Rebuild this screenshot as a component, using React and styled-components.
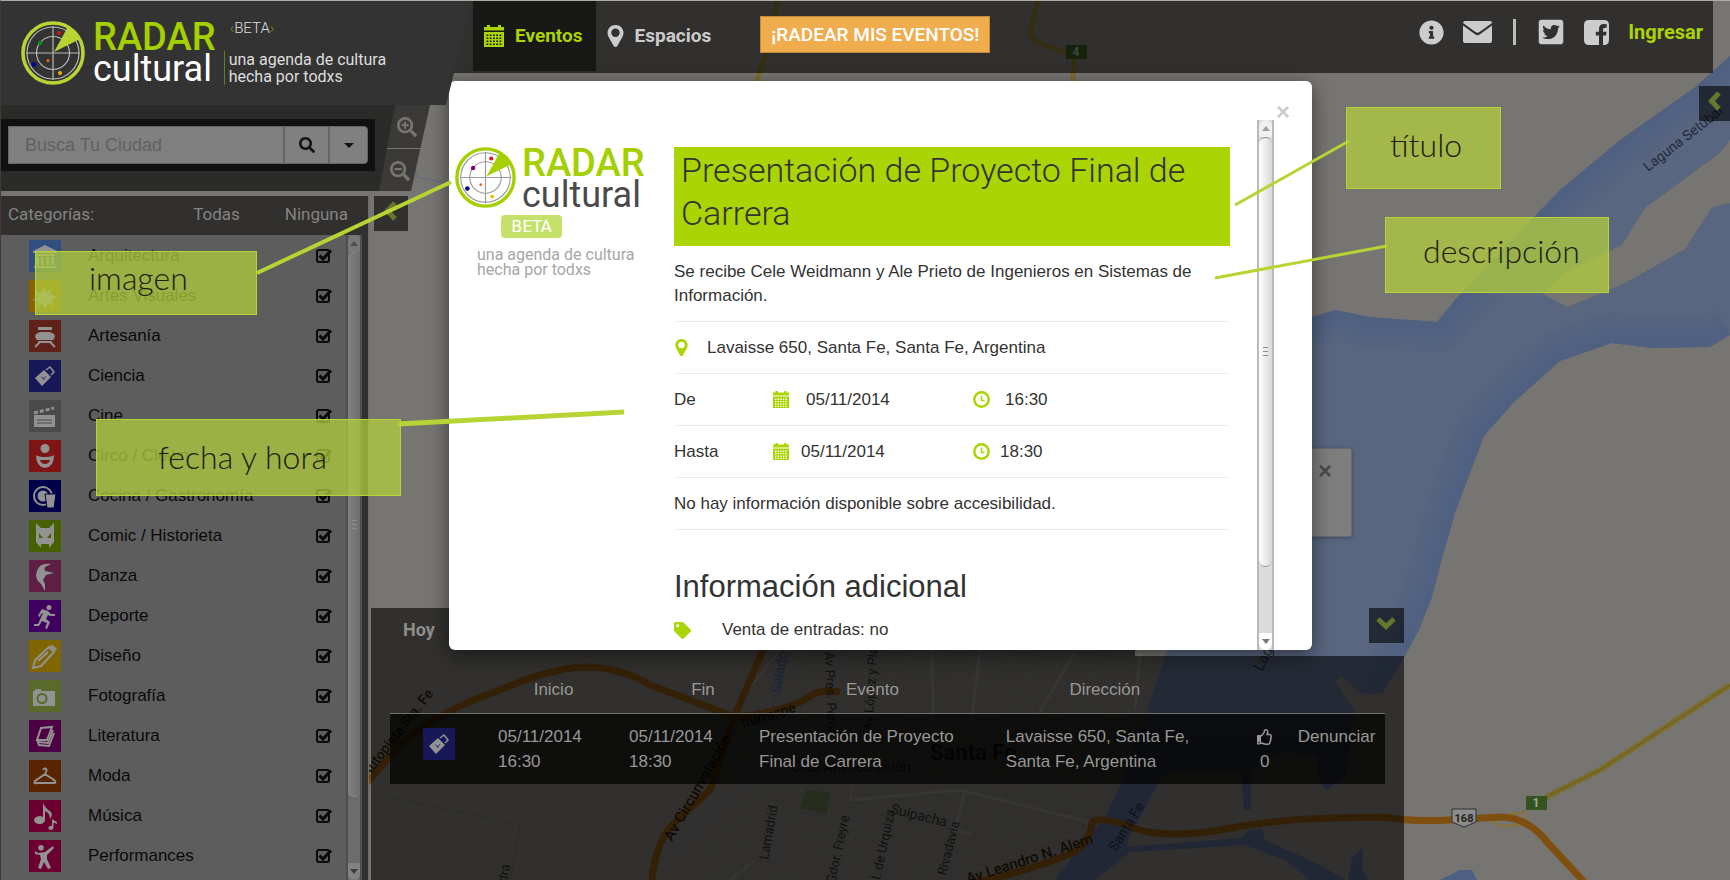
import React from "react";
import styled, { createGlobalStyle, css } from "styled-components";
import {
  FaSearch,
  FaSearchPlus,
  FaSearchMinus,
  FaInfoCircle,
  FaTwitterSquare,
  FaRegThumbsUp,
  FaTag,
} from "react-icons/fa";

const sans = `"Liberation Sans", Arial, sans-serif`;
const techno = `Roboto, "Open Sans", sans-serif`;
const thin = `Lato, "Open Sans", sans-serif`;
const green = "#abd404";
const lime = "#b6d433";
const shade = "rgba(0, 0, 0, 0.59)";

const GlobalStyle = createGlobalStyle`
  *, *::before, *::after { box-sizing: border-box; }
  body { margin: 0; background: #777571; font: 17px/24px ${sans}; overflow: hidden; }
  button, input { font: inherit; margin: 0; padding: 0; border: 0; background: none; color: inherit; }
  h1, h2, p, ul { margin: 0; padding: 0; font-weight: 400; }
  a { color: inherit; text-decoration: none; }
  svg { display: block; flex: none; }
`;

const Page = styled.div`
  position: relative;
  display: flex;
  flex-direction: column;
  height: 100vh;
  overflow: hidden;
  border-top: 1px solid #aeada3;
  border-left: 1px solid #4a3438;
`;

const MapLayer = styled.svg`
  position: absolute;
  top: -1px;
  left: -1px;
  width: 1730px;
  min-width: 100vw;
  height: auto;
`;

/* top bar */

const TopBar = styled.header`
  position: relative;
  display: flex;
  align-items: flex-start;
`;

const Brand = styled.div`
  position: relative;
  z-index: 3;
  display: flex;
  flex: 0 0 471px;
  height: 104px;
  padding: 20px 0 0 20px;
  gap: 8px;
  background: #333333;
  clip-path: polygon(0 0, 100% 0, 445px 100%, 0 100%);
`;

const Wordmark = styled.div`
  font-family: ${techno};
  color: ${(p) => p.$ink};
`;

const Radar = styled.div`
  font-size: 38px;
  line-height: 33px;
  font-weight: 500;
  color: #a4d000;
`;

const Cultural = styled.div`
  font-size: 36px;
  line-height: 30px;
`;

const BrandAside = styled.div`
  display: flex;
  flex-direction: column;
  justify-content: space-between;
  height: 64px;
`;

const Beta = styled.span`
  padding-left: 6px;
  font: 300 15px/15px ${techno};
  color: #dddddd;

  i {
    font-style: normal;
    color: #6f9a12;
  }
`;

const Tagline = styled.p`
  font: 16px/17px ${techno};
  color: #dddddd;
  padding-left: 4px;
  border-left: 1px solid #5c8418;
`;

const Nav = styled.nav`
  display: flex;
  flex: 1;
  align-items: flex-start;
  height: 72px;
  margin: 0 17px 0 -26px;
  padding-left: 27px;
  background: ${shade};
`;

const NavLink = styled.a`
  display: flex;
  align-items: center;
  gap: 11px;
  height: 70px;
  padding: 0 13px 0 11px;
  font: 700 19px/24px ${techno};
  color: ${(p) => (p.$active ? green : "#cccccc")};
  background: ${(p) => (p.$active ? "#181817" : "transparent")};
`;

const CallToAction = styled.button`
  height: 37px;
  margin: 15px auto 0 36px;
  padding: 0 10px;
  border: 1px solid #bf8a3e;
  background: #f0ad4e;
  font: 500 19px/24px ${techno};
  color: #ffffff;
`;

const NavIcons = styled.div`
  display: flex;
  align-items: center;
  gap: 19px;
  margin-top: 17px;
  padding-right: 10px;
  color: #cccccc;

  a {
    display: flex;
    align-items: center;
  }
`;

const NavDivider = styled.span`
  width: 3px;
  height: 26px;
  margin: 0 2px;
  background: #bdbdb8;
`;

const SignIn = styled.a`
  font: 700 20px/24px ${techno};
  color: ${green};
`;

/* sidebar */

const Body = styled.div`
  position: relative;
  display: grid;
  grid-template-columns: 370px 1fr;
  flex: 1;
  min-height: 0;
`;

const Sidebar = styled.aside`
  display: flex;
  flex-direction: column;
  min-height: 0;
`;

const SearchArea = styled.div`
  display: flex;
  width: 429px;
  height: 86px;
  flex: none;
  clip-path: polygon(0 0, 100% 0, 410px 100%, 0 100%);
`;

const SearchShade = styled.div`
  flex: 0 0 394px;
  padding-top: 14px;
  background: #2b2b29;
  clip-path: polygon(0 0, 100% 0, 378px 100%, 0 100%);
`;

const SearchBox = styled.form`
  display: flex;
  width: 374px;
  height: 52px;
  padding: 7px;
  background: #111111;

  > * {
    height: 38px;
    border: 1px solid #666666;
    background: #808080;
  }
`;

const SearchInput = styled.input`
  flex: 1;
  min-width: 0;
  padding: 0 16px !important;
  font-size: 18px !important;
  color: #222222;

  &::placeholder {
    color: #616161;
    opacity: 1;
  }
`;

const SearchButton = styled.button`
  display: grid;
  place-items: center;
  width: ${(p) => p.$width}px;
  color: #111111;
  border-radius: ${(p) => (p.$last ? "0 4px 4px 0" : "0")};
`;

const ZoomStack = styled.div`
  display: flex;
  flex-direction: column;
  flex: 1;
  margin-left: -16px;
  background: #3b3a38;
`;

const ZoomButton = styled.button`
  flex: 1;
  display: flex;
  align-items: center;
  padding: 2px 0 0 ${(p) => p.$indent}px !important;
  color: #75746f;

  & + & {
    border-top: 1px solid #75746f;
  }
`;

const Categories = styled.div`
  display: flex;
  align-items: flex-start;
  gap: 5px;
  flex: 1;
  min-height: 0;
  width: 407px;
  margin-top: 5px;
`;

const CategoryPanel = styled.section`
  display: flex;
  flex-direction: column;
  width: 368px;
  height: 100%;
  background: #31302e;
  border-right: 1px solid #6c6b68;
`;

const CategoryHead = styled.div`
  display: flex;
  align-items: flex-start;
  flex: none;
  height: 39px;
  padding: 6px 20px 0 7px;
  font: 17px/24px ${techno};
  color: #858482;

  h2 {
    flex: 1;
    font: inherit;
  }
  button + button {
    margin-left: 45px;
  }
`;

const CategoryBody = styled.div`
  display: flex;
  flex: 1;
  min-height: 0;
  padding-right: 6px;
`;

const CategoryList = styled.ul`
  flex: 1;
  overflow: hidden;
  list-style: none;
  background: #5d5d5d;
  padding-top: 2px;
`;

const CategoryRow = styled.li`
  height: 40px;
  padding: 3px 14px 0 28px;

  label {
    display: flex;
    align-items: center;
    height: 32px;
    color: #0a0a0a;
  }
  label > span:nth-child(2) {
    flex: 1;
    padding-left: 27px;
  }
`;

const Tile = styled.span`
  display: grid;
  place-items: center;
  width: 32px;
  height: 32px;
  background: ${(p) => p.$color};
`;

const Check = styled.span`
  display: grid;
  width: 16px;
  height: 16px;

  input,
  svg {
    grid-area: 1 / 1;
  }
  input {
    appearance: none;
    width: 14px;
    height: 14px;
    margin-top: 1px;
    border: 2px solid #0a0a0a;
    border-radius: 3px;
  }
  svg {
    pointer-events: none;
    overflow: visible;
  }
`;

const PanelToggle = styled.button`
  display: grid;
  place-items: center;
  width: ${(p) => p.$width}px;
  height: 35px;
  flex: none;
  padding-bottom: 6px !important;
  background: ${shade};
`;

const RightToggle = styled.div`
  position: absolute;
  top: 85px;
  right: 0;
`;

/* scrollbar */

const scrollTones = {
  light: { rail: "#dddbd9", edge: "#bbb8b5", from: "#ffffff", to: "#dad8d6", ink: "#777777" },
  dark: { rail: "#6e6c6a", edge: "#4e4e4e", from: "#828282", to: "#6c6c6c", ink: "#3c3c3c" },
};

const Scroll = styled.div`
  display: flex;
  flex-direction: column;
  flex: none;
  width: ${(p) => p.$width}px;
  color: ${(p) => scrollTones[p.$tone].ink};
  background: ${(p) => scrollTones[p.$tone].rail};
  border: solid ${(p) => scrollTones[p.$tone].edge};
  border-width: 0 2px;
`;

const ScrollArrow = styled.span`
  display: grid;
  place-items: center;
  height: 17px;
  background: ${(p) => scrollTones[p.$tone].from};
  border-radius: ${(p) => (p.$up ? "8px 8px 0 0" : "0 0 8px 8px")};
  opacity: ${(p) => (p.$up ? 0.6 : 1)};
`;

const ScrollThumb = styled.span`
  display: grid;
  place-items: center;
  flex: ${(p) => p.$grow};
  border-radius: 8px;
  border: solid #8c8c8c;
  border-width: 1px 0;
  background: linear-gradient(
    90deg,
    ${(p) => scrollTones[p.$tone].from},
    ${(p) => scrollTones[p.$tone].to}
  );
`;

const ScrollRest = styled.span`
  flex: ${(p) => p.$grow};
`;

/* events panel */

const Main = styled.main`
  display: flex;
  flex-direction: column;
  justify-content: flex-end;
  min-width: 0;
`;

const Events = styled.section`
  width: 76%;
  height: 272px;
  display: flex;
  flex-direction: column;
`;

const EventsTop = styled.div`
  display: flex;
  justify-content: space-between;
  align-items: flex-start;
  height: 48px;
`;

const EventsTab = styled.h2`
  width: 764px;
  height: 48px;
  padding: 10px 32px 0;
  font: 700 18px/24px ${techno};
  color: #8f8e8c;
  background: ${shade};
`;

const EventsBody = styled.div`
  flex: 1;
  padding: 22px 19px 0;
  background: ${shade};
`;

const EventsTable = styled.table`
  width: 100%;
  table-layout: fixed;
  border-collapse: separate;
  border-spacing: 0;
  color: #999896;

  th {
    padding: 0 0 11px;
    font-weight: 400;
    text-align: center;
  }
  th.fin {
    padding-left: 38px;
  }
  td {
    padding: 10px;
    line-height: 25px;
    vertical-align: top;
    background: rgba(0, 0, 0, 0.7);
    border-top: 1px solid #71716f;
  }
  td:first-child {
    padding: 14px 0 0 33px;
  }
  td:last-child {
    padding-right: 0;
  }
  td.vote {
    padding: 10px 0 0 28px;
    text-align: center;
  }
  td.vote svg {
    margin: 5px auto 4px;
  }
`;

/* map pop-up */

const InfoWindow = styled.div`
  position: absolute;
  z-index: 1;
  left: 69.4%;
  top: 447px;
  width: 151px;
  height: 89px;
  padding: 10px 19px 0 0;
  text-align: right;
  background: #7e7e7e;
  border: 1px solid #646a74;
  border-radius: 3px;
  box-shadow: 0 1px 4px rgba(0, 0, 0, 0.3);
`;

const CloseButton = styled.button`
  font: 700 24px/24px ${sans};
  color: ${(p) => p.$color};
`;

/* modal */

const Overlay = styled.div`
  position: absolute;
  inset: 0;
  z-index: 2;
  display: flex;
  justify-content: center;
  align-items: flex-start;
  padding: 80px 0 0 30px;
`;

const Modal = styled.div`
  display: flex;
  flex: 0 1 863px;
  height: 569px;
  overflow: hidden;
  background: #ffffff;
  border-radius: 6px;
  box-shadow: 0 5px 20px rgba(0, 0, 0, 0.5);
`;

const ModalContent = styled.div`
  display: grid;
  grid-template-columns: 219px 1fr;
  align-content: start;
  flex: 1;
  padding: 66px 27px 0 6px;
  color: #333333;
`;

const ModalScroll = styled.div`
  display: flex;
  padding-top: 39px;
`;

const ModalClose = styled.div`
  width: 38px;
  padding: 19px 0 0 2px;
`;

const ModalBrand = styled.div`
  display: flex;
  flex-direction: column;
`;

const ModalBrandRow = styled.div`
  display: flex;
  gap: 6px;
  height: 68px;
`;

const BetaBadge = styled.span`
  width: 61px;
  margin-left: 46px;
  border-radius: 4px;
  background: #c5e06b;
  color: #ffffff;
  font: 16px/23px "DejaVu Sans", sans-serif;
  text-align: center;
`;

const ModalTagline = styled.p`
  margin: 9px 0 0 22px;
  font: 16px/15px ${techno};
  color: #a6a6a6;
`;

const Title = styled.h1`
  padding: 2px 7px 11px;
  font: 300 34px/43px ${techno};
  background: ${green};
`;

const DetailRow = styled.div`
  display: grid;
  grid-template-columns: ${(p) => p.$columns || "1fr"};
  align-items: center;
  min-height: 52px;
  border-bottom: 1px solid #eeeeee;
  ${(p) =>
    p.$tall &&
    css`
      padding: 14px 0 13px;
    `}
`;

const IconText = styled.span`
  display: flex;
  align-items: center;
  gap: ${(p) => p.$gap}px;
  svg {
    color: ${green};
  }
`;

const SubHead = styled.h2`
  margin: 40px 0 14px;
  font-size: 31px;
  line-height: 34px;
`;

/* annotations */

const Leaders = styled.svg`
  position: absolute;
  z-index: 4;
  top: -1px;
  left: -1px;
  pointer-events: none;
`;

const Note = styled.div`
  position: absolute;
  z-index: 5;
  left: ${(p) => p.$x}px;
  top: ${(p) => p.$y}px;
  width: ${(p) => p.$w}px;
  height: ${(p) => p.$h}px;
  padding: ${(p) => p.$pad};
  font: 300 32px/40px ${thin};
  color: #1c200c;
  background: rgba(178, 206, 62, 0.75);
  border: 1px solid ${lime};
`;

/* drawings */

function RadarMark({ size, line, ring, dot }) {
  return (
    <svg width={size} height={size} viewBox="0 0 64 64" fill="none">
      <circle cx="32" cy="32" r="30" stroke={ring} strokeWidth="3.6" />
      <g stroke={line} strokeWidth="1.2">
        <circle cx="32" cy="32" r="26" />
        <circle cx="32" cy="32" r="16.5" />
        <path d="M5 32H59M32 5V59" />
      </g>
      <path d="M33 31 47 5.500Q55 9 59 18Z" fill={ring} />
      <circle cx="38" cy="12" r="2.100" fill="#d8141c" />
      <circle cx="19" cy="22" r="2.300" fill={dot} />
      <circle cx="13" cy="43.500" r="2.400" fill="#00008c" />
      <circle cx="27" cy="39.500" r="1.500" fill="#f06a14" />
      <circle cx="39" cy="52" r="2" fill="#f5b800" />
    </svg>
  );
}

const calendarCells = [9.5, 12.5, 15.5, 18.5]
  .map((y) => [2.5, 5.75, 9, 12.25, 15.5].map((x) => `M${x} ${y}v1.600h1.800v-1.600z`).join(""))
  .join("");

function Calendar({ size }) {
  return (
    <svg width={size} height={(size * 22) / 20} viewBox="0 0 20 22" fill="currentColor">
      <path d="M0 2H3V0H6V2H14V0H17V2H20V5.500H0Z" />
      <path fillRule="evenodd" d={`M0 7H20V22H0Z${calendarCells}`} />
    </svg>
  );
}

function Pin({ width, height }) {
  return (
    <svg width={width} height={height} viewBox="0 0 16 22" fill="currentColor">
      <path
        fillRule="evenodd"
        d="M8 0C3.500 0 0 3.400 0 7.800 0 9.300.4 10.400 1 11.700L6.300 21.200Q8 22.800 9.700 21.200L15 11.700C15.600 10.400 16 9.300 16 7.800 16 3.400 12.500 0 8 0ZM8 3.600A4.200 4.200 0 1 1 8 12 4.200 4.200 0 0 1 8 3.600Z"
      />
    </svg>
  );
}

function Clock() {
  return (
    <svg width="17" height="17" viewBox="0 0 17 17" fill="none" stroke="currentColor">
      <circle cx="8.500" cy="8.500" r="7.200" strokeWidth="2.500" />
      <path d="M8.500 4.500V9.500H11.500" strokeWidth="1.500" />
    </svg>
  );
}

function Envelope() {
  return (
    <svg width="29" height="22" viewBox="0 0 29 22" fill="currentColor">
      <path d="M2 0H27Q29 0 29 2L16.500 11Q14.500 12.600 12.500 11L0 2Q0 0 2 0Z" />
      <path d="M0 4.500 12 13.300Q14.500 15 17 13.300L29 4.500V20Q29 22 27 22H2Q0 22 0 20Z" />
    </svg>
  );
}

function Facebook() {
  return (
    <svg width="25" height="25" viewBox="0 0 25 25" fill="currentColor">
      <path d="M5 0H20Q25 0 25 5V20Q25 25 20 25H19V15.500H22L22.500 11.700H19V9.500Q19 7.700 21 7.700H22.700V4.200Q21.500 4 20 4 15 4 15 8.900V11.700H11.800V15.500H15V25H5Q0 25 0 20V5Q0 0 5 0Z" />
    </svg>
  );
}

const turns = { left: 0, down: -90 };

function Chevron({ dir, color = "#66762d" }) {
  return (
    <svg width="20" height="20" viewBox="0 0 20 20" fill="none" stroke={color}>
      <path d="M14 2 6.500 10 14 18" strokeWidth="5" transform={`rotate(${turns[dir]} 10 10)`} />
    </svg>
  );
}

const glyphs = {
  arquitectura: (
    <path d="M16 5 28 11V13H4V11ZM6 14H26V16H6ZM7 17H10V25H7ZM12 17H14.500V25H12ZM17.500 17H20V25H17.500ZM22 17H25V25H22ZM5 26H27V28H5Z" />
  ),
  artes: (
    <path d="M15 6 17 12 23 9 21 14 28 17 22 20 25 26 19 23 17 29 13 24 8 28 9 21 3 20 9 17 5 11 12 13Z" />
  ),
  artesania: (
    <g>
      <path d="M9 7H23V10H9Z" />
      <path d="M11 12H21L25 14Q27 17 24 20H8Q5 17 7 14Z" />
      <path d="M9 22H23" stroke="currentColor" strokeWidth="2" />
      <path d="M11 22 6 27M21 22 26 27" stroke="currentColor" strokeWidth="2" />
    </g>
  ),
  ciencia: (
    <g>
      <path d="M6 18 15 10 22 17 13 26Z" />
      <path d="M17 10 21 7 25 12 22 15" fill="none" stroke="currentColor" strokeWidth="1.500" />
      <path d="M12 17 16 19M14 20 17 16" stroke="#3a3a78" />
    </g>
  ),
  cine: (
    <g>
      <path d="M5 15H26V27H5Z" />
      <path d="M5 13 25 8" stroke="currentColor" strokeWidth="3" strokeDasharray="4 2" />
      <path d="M8 20H23M8 23H23" stroke="#4a4a4a" />
    </g>
  ),
  circo: (
    <path
      fillRule="evenodd"
      d="M16 4A4.500 4.500 0 1 1 16 13 4.500 4.500 0 0 1 16 4ZM7 15Q10 17 16 17 22 17 25 15 25 27 16 28 7 27 7 15ZM11 20Q12 24 16 24 20 24 21 20Z"
    />
  ),
  cocina: (
    <g>
      <circle cx="14" cy="16" r="9" fill="none" stroke="currentColor" strokeWidth="2" />
      <circle cx="14" cy="16" r="5.500" />
      <path d="M16 14H27L25 28H18Z" stroke="#00004a" />
    </g>
  ),
  comic: (
    <path
      fillRule="evenodd"
      d="M7 3 12 8H20L25 3V22L20 28V24H12V28L7 22ZM10 13V18H14ZM22 13V18H18Z"
    />
  ),
  danza: (
    <path d="M11 6Q15 3 22 4L16 7Q15 9 16 11L25 13 17 15 14 20 16 24 16 31 12 24Q7 20 7 15 8 9 11 6Z" />
  ),
  deporte: (
    <path d="M20 5A2.500 2.500 0 1 1 20 10 2.500 2.500 0 0 1 20 5ZM13 9 19 11 22 14 26 14V16H21L19 15 17 19 21 22 18 29 16 28 18 23 13 21 10 26 5 26V24L9 24 14 13 12 14 11 17 9 16 11 12Z" />
  ),
  diseno: (
    <g fill="none" stroke="currentColor" strokeWidth="2">
      <path d="M4 28 6 20 20 7 25 12 12 26Z" />
      <path d="M9 21 19 12" />
      <path d="M22 6 27 10" strokeWidth="3" />
    </g>
  ),
  foto: (
    <path
      fillRule="evenodd"
      d="M4 11H6V9H12V11H26V26H4ZM13 13A5.500 5.500 0 1 0 13 24 5.500 5.500 0 0 0 13 13ZM13 15A3.500 3.500 0 1 1 13 22 3.500 3.500 0 0 1 13 15Z"
    />
  ),
  libro: (
    <g fill="none" stroke="currentColor" strokeWidth="2">
      <path d="M8 20 12 8 23 7 18 20ZM8 20 10 25 20 26 25 13" />
      <path d="M9 22 19 23 24 10" />
    </g>
  ),
  moda: (
    <path
      d="M14 10Q16 7 17.500 9.500 17.500 12 16 14L6 21Q4 24 8 23H25Q28 23 25 20L16 14"
      fill="none"
      stroke="currentColor"
      strokeWidth="2"
    />
  ),
  musica: (
    <path d="M14 3Q16 8 22 12 24 15 21 19 21 13 16 11V20A5.500 4 0 1 1 14 17ZM23 19 28 22V24L24.500 22.500V28A2.500 2 0 1 1 23 26Z" />
  ),
  performance: (
    <path d="M12 5A2.800 2.800 0 1 1 12 10.600 2.800 2.800 0 0 1 12 5ZM6 11 9 13 16 12 24 6 25 8 18 15 18 19 22 28 19 29 15 22 12 29 9 28 12 19 11 15 6 14Z" />
  ),
};

function Glyph({ name }) {
  return (
    <svg width="32" height="32" viewBox="0 0 32 32" fill="currentColor" color="#929292">
      {glyphs[name]}
    </svg>
  );
}

const categories = [
  ["Arquitectura", "arquitectura", "#2f4f80"],
  ["Artes Visuales", "artes", "#8a6200"],
  ["Artesanía", "artesania", "#5f2118"],
  ["Ciencia", "ciencia", "#181858"],
  ["Cine", "cine", "#4a4a4a"],
  ["Circo / Clown", "circo", "#801414"],
  ["Cocina / Gastronomía", "cocina", "#00004a"],
  ["Comic / Historieta", "comic", "#476000"],
  ["Danza", "danza", "#5f1f44"],
  ["Deporte", "deporte", "#3f0060"],
  ["Diseño", "diseno", "#7f6600"],
  ["Fotografía", "foto", "#5a6a2a"],
  ["Literatura", "libro", "#4d0044"],
  ["Moda", "moda", "#5a2400"],
  ["Música", "musica", "#6b0030"],
  ["Performances", "performance", "#6b0030"],
];

function Scrollbar({ tone, width, thumb, rest }) {
  return (
    <Scroll $tone={tone} $width={width} aria-hidden="true">
      <ScrollArrow $tone={tone} $up>
        <svg width="8" height="5" viewBox="0 0 8 5" fill="currentColor">
          <path d="M0 5 4 0 8 5Z" />
        </svg>
      </ScrollArrow>
      <ScrollThumb $tone={tone} $grow={thumb}>
        <svg width="5" height="10" viewBox="0 0 5 10" stroke="#8c8c8c">
          <path d="M0 .5H5M0 4.500H5M0 8.500H5" />
        </svg>
      </ScrollThumb>
      <ScrollRest $grow={rest} />
      <ScrollArrow $tone={tone}>
        <svg width="8" height="5" viewBox="0 0 8 5" fill="currentColor">
          <path d="M0 0 4 5 8 0Z" />
        </svg>
      </ScrollArrow>
    </Scroll>
  );
}

const shoreline =
  "M1730 56 1620 140 1560 190 1455 300 1437 322 1370 317 1335 310 1250 335M1730 335 1710 347 1650 348 1612 343 1560 361 1513 403 1484 436 1456 510 1432 597 1405 656 1382 694";

function CityMap() {
  return (
    <MapLayer viewBox="0 0 1730 880" fill="none" fontFamily={techno} aria-hidden="true">
      <defs>
        <pattern
          id="blocks"
          width="9"
          height="9"
          patternUnits="userSpaceOnUse"
          patternTransform="rotate(8)"
        >
          <path d="M0 0H9M0 0V9" stroke="#6b6966" strokeWidth="1" />
        </pattern>
        <clipPath id="water">
          <path d="M1730 56 1694 88 1620 140 1560 190 1500 252 1455 300 1437 322 1370 317 1335 310 1200 350 1190 560 1167 650 1147 710 1123 780 1105 817 1090 835 1055 880H1095L1130 852 1245 845 1285 860 1310 880H1345L1320 865 1265 840 1262 829 1250 829 1242 838 1127 847 1128 840 1160 780 1170 770 1241 770 1244 810H1251V770L1285 752 1317 755 1319 780 1326 791 1345 775 1350 750 1355 711 1335 682 1341 676 1361 694 1382 694 1405 656 1419 630 1432 597 1443 555 1456 510 1484 436 1513 403 1560 361 1612 343 1650 348 1710 347 1730 335Z" />
        </clipPath>
      </defs>
      <path d="M0 0H1730V880H0Z" fill="#777571" />
      <path d="M690 880 730 800 770 650H1160L1147 710 1105 817 1055 880Z" fill="url(#blocks)" />
      <path d="M806 790 830 792 827 815 800 808Z" fill="#5d6d4c" />
      <g clipPath="url(#water)">
        <path d="M1000 0H1730V880H1000Z" fill="#596780" />
        <g stroke="#4d5f82" opacity="0.8" strokeLinejoin="round">
          <path d={shoreline} strokeWidth="60" strokeOpacity="0.15" />
          <path d={shoreline} strokeWidth="48" strokeOpacity="0.2" />
          <path d={shoreline} strokeWidth="36" strokeOpacity="0.25" />
          <path d={shoreline} strokeWidth="24" strokeOpacity="0.3" />
          <path d={shoreline} strokeWidth="12" strokeOpacity="0.4" />
        </g>
        <path d="M1000 740H1400V880H1000Z" fill="#4d5f82" opacity="0.8" />
      </g>
      <path
        d="M1730 140 1720 153 1645 208 1622 245 1565 273 1543 294 1568 307 1625 283 1685 249 1712 207 1730 203Z"
        fill="#777571"
      />
      <path d="M1348 880 1352 858 1363 848 1362 868 1368 880ZM1440 880 1460 870H1472L1477 880Z" fill="#4d5f82" />

      <g stroke="#858380" strokeWidth="3">
        <path d="M932 650 933 725M980 650 970 730M1076 650 1038 715M1140 655 1135 710" />
        <path d="M850 800 960 790 1090 822M965 790 955 830 972 834M1100 820 1150 828" />
        <path d="M755 860 730 880M850 800 870 690M780 650 740 700" strokeWidth="2" />
      </g>
      <path
        d="M406 105 409 150 417 177 449 184M790 650 765 730 720 760M770 760 640 880"
        stroke="#5a6886"
        strokeWidth="1"
      />
      <path d="M371 793 520 825 510 880" stroke="#6a6865" />

      <g stroke="#7d6d2c" strokeWidth="5">
        <path d="M778 0 767 50 754 90" />
        <path d="M1038 0 1030 34 1036 42 1075 56 1072 90" />
        <path d="M1730 685 1600 770 1550 795 1530 808" strokeWidth="6" />
      </g>
      <path d="M1730 685 1600 770 1550 795" stroke="#6a5a20" strokeWidth="1" />
      <path d="M1486 818 1525 812 1527 825 1500 826Z" stroke="#8a7434" strokeWidth="2" />
      <g stroke="#7f4f10" strokeWidth="7" strokeLinejoin="round">
        <path d="M362 788 400 745Q440 710 500 690 550 668 585 667 620 667 650 685L735 717Q790 712 815 693 825 690 840 692" />
        <path d="M763 650 735 715 710 790 672 825Q655 845 652 880" />
        <path d="M940 890Q1020 875 1075 852 1092 838 1092 822 1100 815 1140 830 1170 838 1220 830 1270 820 1330 818L1385 817Q1410 822 1450 820L1500 817Q1528 817 1548 843L1586 884" />
      </g>

      <g fill="#2a2926" fontSize="13">
        <text x="1648" y="172" transform="rotate(-38 1648 172)" fontSize="14" fill="#232a38">Laguna Setúbal</text>
        <text x="1262" y="672" transform="rotate(-63 1262 672)" fontSize="15">Laguna Setúbal</text>
        <text x="368" y="778" transform="rotate(-52 368 778)" fontSize="14" fontWeight="500" fill="#2a1c08">Autopista Sta. Fe</text>
        <text x="672" y="842" transform="rotate(-60 672 842)" fontSize="15" fontWeight="500" fill="#2a1c08">Av Circunvalación</text>
        <text x="743" y="728" transform="rotate(-17 743 728)" fontSize="14" fontWeight="500" fill="#2a1c08">Iturraspe</text>
        <text x="780" y="694" transform="rotate(-80 780 694)" fontSize="14" fill="#3d5490">Salado</text>
        <text x="825" y="652" transform="rotate(88 825 652)">Av Pres. Perón</text>
        <text x="872" y="731" transform="rotate(-86 872 731)">Av López y Planes</text>
        <text x="768" y="860" transform="rotate(-80 768 860)">Lamadrid</text>
        <text x="835" y="884" transform="rotate(-78 835 884)">Gdor. Freyre</text>
        <text x="876" y="900" transform="rotate(-78 876 900)">Gral. de Urquiza</text>
        <text x="890" y="813" transform="rotate(14 890 813)" fontSize="14">Suipacha</text>
        <text x="946" y="876" transform="rotate(-76 946 876)">Rivadavia</text>
        <text x="505" y="890" transform="rotate(-78 505 890)">edra</text>
        <text x="968" y="884" transform="rotate(-18 968 884)" fontSize="15" fontWeight="500" fill="#2a1c08">Av Leandro N. Alem</text>
        <text x="1116" y="852" transform="rotate(-58 1116 852)" fontSize="14" fill="#1f2940">Santa Fe</text>
        <text x="792" y="772" fontSize="14">Club Atlético Unión</text>
        <text x="930" y="760" fontSize="22" fontWeight="700">Santa Fe</text>
      </g>
      <path d="M1066 45H1087V59H1066ZM1526 796H1547V810H1526Z" fill="#34531f" />
      <path d="M1452 809H1476V822L1464 827 1452 822Z" fill="#8c8c8c" stroke="#2c3038" />
      <g fontSize="12" textAnchor="middle" fontWeight="700" fill="#a5a5a0">
        <text x="1076" y="56">4</text>
        <text x="1536" y="807">1</text>
        <text x="1464" y="822" fill="#222222" fontSize="11">168</text>
      </g>
    </MapLayer>
  );
}

export default function App() {
  return (
    <>
      <GlobalStyle />
      <Page>
        <CityMap />

        <TopBar>
          <Brand>
            <RadarMark size={64} line="#b9b9b9" ring={lime} dot="#0a8a1c" />
            <Wordmark $ink="#ffffff">
              <Radar>RADAR</Radar>
              <Cultural>cultural</Cultural>
            </Wordmark>
            <BrandAside>
              <Beta>
                <i>‹</i>BETA<i>›</i>
              </Beta>
              <Tagline>
                una agenda de cultura
                <br />
                hecha por todxs
              </Tagline>
            </BrandAside>
          </Brand>
          <Nav>
            <NavLink href="#eventos" $active>
              <Calendar size={20} />
              Eventos
            </NavLink>
            <NavLink href="#espacios">
              <Pin width={17} height={22} />
              Espacios
            </NavLink>
            <CallToAction type="button">¡RADEAR MIS EVENTOS!</CallToAction>
            <NavIcons>
              <a href="#info" aria-label="Información">
                <FaInfoCircle size={25} />
              </a>
              <a href="#contacto" aria-label="Contacto">
                <Envelope />
              </a>
              <NavDivider />
              <a href="#twitter" aria-label="Twitter">
                <FaTwitterSquare size={28} />
              </a>
              <a href="#facebook" aria-label="Facebook">
                <Facebook />
              </a>
              <SignIn href="#ingresar">Ingresar</SignIn>
            </NavIcons>
          </Nav>
        </TopBar>

        <Body>
          <Sidebar>
            <SearchArea>
              <SearchShade>
                <SearchBox onSubmit={(e) => e.preventDefault()}>
                  <SearchInput aria-label="Ciudad" placeholder="Busca Tu Ciudad" />
                  <SearchButton type="submit" aria-label="Buscar" $width={45}>
                    <FaSearch size={16} />
                  </SearchButton>
                  <SearchButton type="button" aria-label="Opciones" $width={39} $last>
                    <svg width="10" height="5" viewBox="0 0 10 5" fill="currentColor">
                      <path d="M0 0H10L5 5Z" />
                    </svg>
                  </SearchButton>
                </SearchBox>
              </SearchShade>
              <ZoomStack>
                <ZoomButton type="button" aria-label="Acercar" $indent={18}>
                  <FaSearchPlus size={20} />
                </ZoomButton>
                <ZoomButton type="button" aria-label="Alejar" $indent={11}>
                  <FaSearchMinus size={20} />
                </ZoomButton>
              </ZoomStack>
            </SearchArea>

            <Categories>
              <CategoryPanel>
                <CategoryHead>
                  <h2>Categorías:</h2>
                  <button type="button">Todas</button>
                  <button type="button">Ninguna</button>
                </CategoryHead>
                <CategoryBody>
                  <CategoryList>
                    {categories.map(([name, glyph, color]) => (
                      <CategoryRow key={name}>
                        <label>
                          <Tile $color={color}>
                            <Glyph name={glyph} />
                          </Tile>
                          <span>{name}</span>
                          <Check>
                            <input type="checkbox" defaultChecked />
                            <svg width="16" height="16" viewBox="0 0 16 16" fill="none">
                              <path d="M3.500 7.500 7 11 15 2.500" stroke="#0a0a0a" strokeWidth="3" />
                            </svg>
                          </Check>
                        </label>
                      </CategoryRow>
                    ))}
                  </CategoryList>
                  <Scrollbar tone="dark" width={16} thumb={545} rest={66} />
                </CategoryBody>
              </CategoryPanel>
              <PanelToggle type="button" aria-label="Ocultar categorías" $width={34}>
                <Chevron dir="left" />
              </PanelToggle>
            </Categories>
          </Sidebar>

          <Main>
            <Events>
              <EventsTop>
                <EventsTab>Hoy</EventsTab>
                <PanelToggle type="button" aria-label="Ocultar eventos" $width={35}>
                  <Chevron dir="down" />
                </PanelToggle>
              </EventsTop>
              <EventsBody>
                <EventsTable>
                  <colgroup>
                    <col width="98" />
                    <col width="131" />
                    <col width="130" />
                    <col />
                    <col width="218" />
                    <col width="74" />
                    <col width="97" />
                  </colgroup>
                  <thead>
                    <tr>
                      <th />
                      <th>Inicio</th>
                      <th className="fin">Fin</th>
                      <th>Evento</th>
                      <th>Dirección</th>
                      <th />
                      <th />
                    </tr>
                  </thead>
                  <tbody>
                    <tr>
                      <td>
                        <Tile $color="#181858">
                          <Glyph name="ciencia" />
                        </Tile>
                      </td>
                      <td>
                        05/11/2014
                        <br />
                        16:30
                      </td>
                      <td>
                        05/11/2014
                        <br />
                        18:30
                      </td>
                      <td>
                        Presentación de Proyecto
                        <br />
                        Final de Carrera
                      </td>
                      <td>
                        Lavaisse 650, Santa Fe,
                        <br />
                        Santa Fe, Argentina
                      </td>
                      <td className="vote">
                        <FaRegThumbsUp size={16} />0
                      </td>
                      <td>
                        <a href="#denunciar">Denunciar</a>
                      </td>
                    </tr>
                  </tbody>
                </EventsTable>
              </EventsBody>
            </Events>
          </Main>
        </Body>

        <RightToggle>
          <PanelToggle type="button" aria-label="Mostrar panel" $width={31}>
            <Chevron dir="left" />
          </PanelToggle>
        </RightToggle>

        <InfoWindow>
          <CloseButton type="button" aria-label="Cerrar aviso" $color="#4b4b4b">
            ×
          </CloseButton>
        </InfoWindow>

        <Overlay>
          <Modal role="dialog" aria-label="Presentación de Proyecto Final de Carrera">
            <ModalContent>
              <ModalBrand>
                <ModalBrandRow>
                  <RadarMark size={61} line="#9a9a9a" ring="#a4d000" dot="#800080" />
                  <Wordmark $ink="#4a4a4a">
                    <Radar>RADAR</Radar>
                    <Cultural>cultural</Cultural>
                  </Wordmark>
                </ModalBrandRow>
                <BetaBadge>BETA</BetaBadge>
                <ModalTagline>
                  una agenda de cultura
                  <br />
                  hecha por todxs
                </ModalTagline>
              </ModalBrand>
              <div>
                <Title>
                  Presentación de Proyecto Final de
                  <br />
                  Carrera
                </Title>
                <DetailRow $tall>
                  Se recibe Cele Weidmann y Ale Prieto de Ingenieros en Sistemas de
                  <br />
                  Información.
                </DetailRow>
                <DetailRow>
                  <IconText $gap={18}>
                    <Pin width={15} height={17} />
                    Lavaisse 650, Santa Fe, Santa Fe, Argentina
                  </IconText>
                </DetailRow>
                <DetailRow $columns="99px 200px 1fr">
                  <span>De</span>
                  <IconText $gap={17}>
                    <Calendar size={16} />
                    05/11/2014
                  </IconText>
                  <IconText $gap={15}>
                    <Clock />
                    16:30
                  </IconText>
                </DetailRow>
                <DetailRow $columns="99px 200px 1fr">
                  <span>Hasta</span>
                  <IconText $gap={12}>
                    <Calendar size={16} />
                    05/11/2014
                  </IconText>
                  <IconText $gap={10}>
                    <Clock />
                    18:30
                  </IconText>
                </DetailRow>
                <DetailRow>No hay información disponible sobre accesibilidad.</DetailRow>
                <SubHead>Información adicional</SubHead>
                <IconText $gap={31}>
                  <FaTag size={17} />
                  Venta de entradas: no
                </IconText>
              </div>
            </ModalContent>
            <ModalScroll>
              <Scrollbar tone="light" width={17} thumb={430} rest={66} />
            </ModalScroll>
            <ModalClose>
              <CloseButton type="button" aria-label="Cerrar" $color="#cccccc">
                ×
              </CloseButton>
            </ModalClose>
          </Modal>
        </Overlay>

        <Note $x={34} $y={250} $w={222} $h={64} $pad="6px 0 0 53px">
          imagen
        </Note>
        <Note $x={95} $y={418} $w={305} $h={77} $pad="17px 0 0 61px">
          fecha y hora
        </Note>
        <Note $x={1345} $y={106} $w={155} $h={82} $pad="17px 0 0 43px">
          título
        </Note>
        <Note $x={1384} $y={216} $w={224} $h={76} $pad="13px 0 0 37px">
          descripción
        </Note>
        <Leaders width="1730" height="880" viewBox="0 0 1730 880" stroke={lime}>
          <path d="M257 273 451 182" strokeWidth="4" />
          <path d="M398 424 624 412" strokeWidth="5" />
          <path d="M1235 205 1349 141" strokeWidth="3" />
          <path d="M1215 278 1387 246" strokeWidth="3" />
        </Leaders>
      </Page>
    </>
  );
}
